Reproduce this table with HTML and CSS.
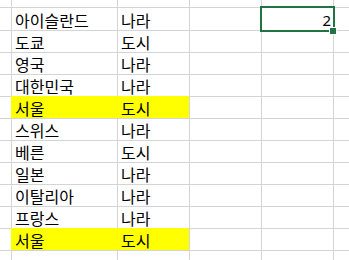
FILE: index.html
```html
<!DOCTYPE html>
<html lang="ko">
<head>
<meta charset="utf-8">
<title>Sheet</title>
<link rel="stylesheet" href="styles.css">
</head>
<body>
<div class="sheet">
  <div class="c edge"></div><div class="c"></div><div class="c"></div><div class="c"></div><div class="c"></div><div class="c"></div>

  <div class="c edge"></div><div class="c t">아이슬란드</div><div class="c t">나라</div><div class="c"></div><div class="c num sel">2<span class="handle"></span></div><div class="c"></div>
  <div class="c edge"></div><div class="c t">도쿄</div><div class="c t">도시</div><div class="c"></div><div class="c"></div><div class="c"></div>
  <div class="c edge"></div><div class="c t">영국</div><div class="c t">나라</div><div class="c"></div><div class="c"></div><div class="c"></div>
  <div class="c edge"></div><div class="c t">대한민국</div><div class="c t">나라</div><div class="c"></div><div class="c"></div><div class="c"></div>
  <div class="c edge"></div><div class="c t hl">서울</div><div class="c t hl">도시</div><div class="c"></div><div class="c"></div><div class="c"></div>
  <div class="c edge"></div><div class="c t">스위스</div><div class="c t">나라</div><div class="c"></div><div class="c"></div><div class="c"></div>
  <div class="c edge"></div><div class="c t">베른</div><div class="c t">도시</div><div class="c"></div><div class="c"></div><div class="c"></div>
  <div class="c edge"></div><div class="c t">일본</div><div class="c t">나라</div><div class="c"></div><div class="c"></div><div class="c"></div>
  <div class="c edge"></div><div class="c t">이탈리아</div><div class="c t">나라</div><div class="c"></div><div class="c"></div><div class="c"></div>
  <div class="c edge"></div><div class="c t">프랑스</div><div class="c t">나라</div><div class="c"></div><div class="c"></div><div class="c"></div>
  <div class="c edge"></div><div class="c t hl">서울</div><div class="c t hl">도시</div><div class="c"></div><div class="c"></div><div class="c"></div>

  <div class="c edge"></div><div class="c"></div><div class="c"></div><div class="c"></div><div class="c"></div><div class="c"></div>
</div>
</body>
</html>
```
FILE: styles.css
```css
html, body {
  margin: 0;
  padding: 0;
  background: #ffffff;
  width: 349px;
  height: 260px;
  overflow: hidden;
}

.sheet {
  display: grid;
  grid-template-columns: 11px 105px 71px 71px 71px 1fr;
  grid-template-rows: 7px 22px repeat(10, 21px) 20px;
  gap: 1px;
  background: #d4d4d4;
  width: 349px;
  height: 260px;
  font-family: "Noto Sans CJK KR", "Noto Sans", sans-serif;
  font-size: 16px;
  color: #000000;
}

.c {
  background: #ffffff;
  display: flex;
  align-items: center;
  white-space: nowrap;
  overflow: visible;
  line-height: 1;
}

.t {
  padding-left: 3px;
  padding-top: 1px;
}

.hl {
  background: #ffff00;
  box-shadow: -1px 0 0 #ffff00, 0 -1px 0 #ffff00, -1px -1px 0 #ffff00;
}

.num {
  justify-content: flex-end;
  padding-right: 2px;
  padding-top: 3px;
  font-family: "Noto Sans", sans-serif;
  font-size: 15px;
}

.sel {
  position: relative;
  z-index: 2;
}

.sel::before {
  content: "";
  position: absolute;
  left: -2px;
  top: -2px;
  right: -2px;
  bottom: -2px;
  border: 2px solid #217346;
  pointer-events: none;
}

.handle {
  position: absolute;
  right: -3px;
  bottom: -4px;
  width: 6px;
  height: 6px;
  background: #217346;
  box-shadow: 0 0 0 1px #ffffff;
}
```
